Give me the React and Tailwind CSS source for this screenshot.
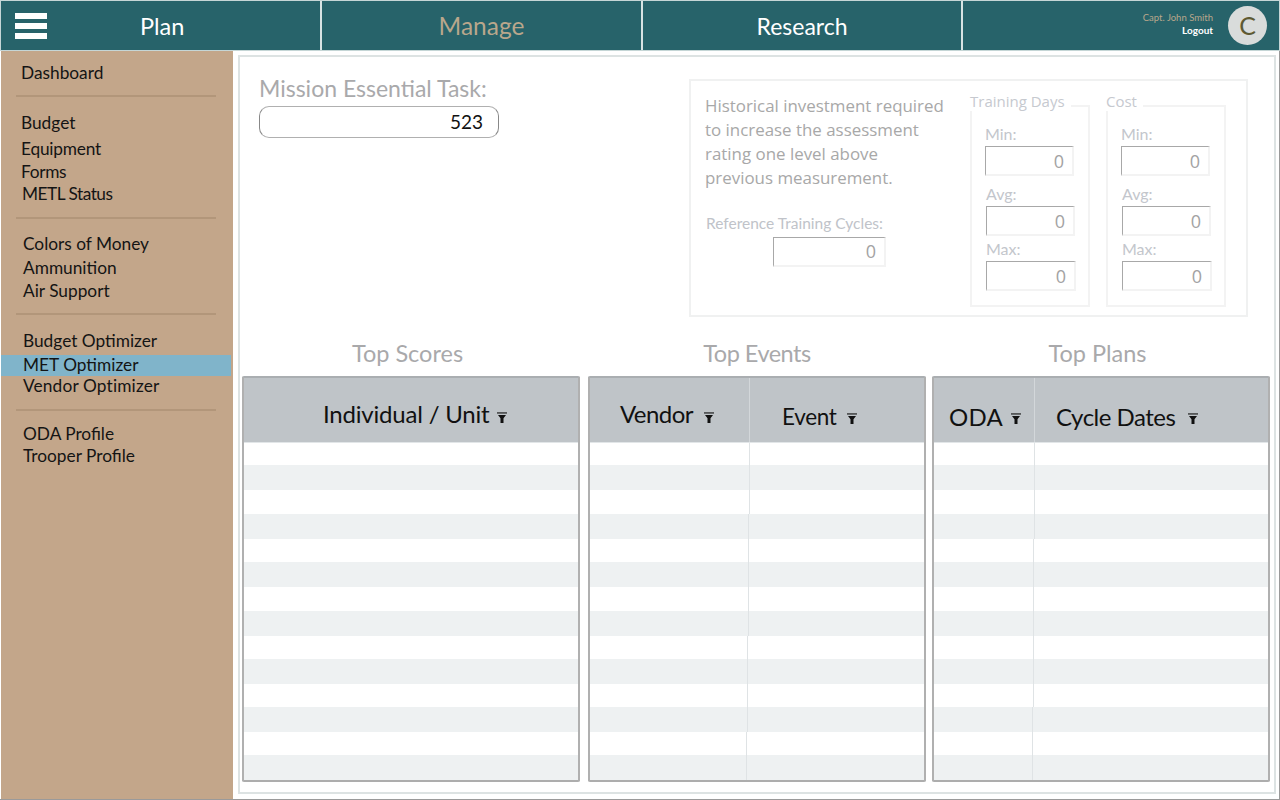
const sideGroups = [
  {
    cls: "pt-[11px] pb-[11px]",
    items: [{ label: "Dashboard", cls: "h-[22px] pl-[20px]" }],
  },
  {
    cls: "pt-[14px] pb-[11px]",
    items: [
      { label: "Budget", cls: "h-[24px] pl-[20px] mb-[2px]" },
      { label: "Equipment", cls: "h-[24px] pl-[20px] tracking-[-0.2px]" },
      { label: "Forms", cls: "h-[21px] pl-[20px] tracking-[-0.3px]" },
      { label: "METL Status", cls: "h-[24px] pl-[21px] tracking-[-0.5px]" },
    ],
  },
  {
    cls: "pt-[13px] pb-[11px]",
    items: [
      { label: "Colors of Money", cls: "h-[24px] pl-[22px]" },
      { label: "Ammunition", cls: "h-[24px] pl-[22px]" },
      { label: "Air Support", cls: "h-[22px] pl-[22px]" },
    ],
  },
  {
    cls: "pt-[13px] pb-[12px]",
    items: [
      { label: "Budget Optimizer", cls: "h-[27px] pb-[2px] pl-[22px]" },
      { label: "MET Optimizer", cls: "h-[21px] pb-[2px] pl-[22px] w-[230px] bg-[#80b4ca]" },
      { label: "Vendor Optimizer", cls: "h-[21px] pb-[2px] pl-[22px] tracking-[0.15px]" },
    ],
  },
  {
    cls: "pt-[12px]",
    items: [
      { label: "ODA Profile", cls: "h-[22px] pl-[22px]" },
      { label: "Trooper Profile", cls: "h-[22px] pl-[22px]" },
    ],
  },
];

const rowHeights = [
  "h-[22px]", "h-[25px]", "h-[24px]", "h-[25px]", "h-[23px]", "h-[25px]", "h-[24px]",
  "h-[25px]", "h-[23px]", "h-[25px]", "h-[23px]", "h-[25px]", "h-[23px]", "h-[26px]",
];
const rowTotal = 338;

function FilterIcon({ className }) {
  return (
    <svg width="10" height="11" viewBox="0 0 10 11" className={`shrink-0 ${className}`}>
      <rect x="0" y="0.4" width="10" height="1.1" fill="#111" />
      <path d="M1 3 H9 L6.5 6.2 V11 H3.5 V6.2 Z" fill="#111" />
    </svg>
  );
}

function Head({ label, cls, iconCls }) {
  return (
    <div className={`flex items-center whitespace-nowrap leading-none text-[#111] ${cls}`}>
      {label}
      <FilterIcon className={iconCls} />
    </div>
  );
}

function DataTable({ title, titleCls, split, splitEnd, children }) {
  return (
    <div className="flex w-[338px] flex-col">
      <div className={`h-[36px] text-center text-[23.5px] leading-[26px] text-[#a9a9ab] ${titleCls}`}>{title}</div>
      <div className="flex h-[406px] flex-col overflow-hidden rounded-[2px] border-x-2 border-t-2 border-b-2 border-x-[#b0b0b0] border-t-[#aaaeb1] border-b-[#adadad]">
        <div className="flex h-[65px] shrink-0 border-b border-[#e2e6e8] bg-[#bfc4c8]">{children}</div>
        {rowHeights.map((h, i) => {
          // the column rule leans a little from top to bottom in the picture
          const sum = rowHeights.slice(0, i).reduce((a, c) => a + Number(c.match(/\d+/)[0]), 0);
          const w = split ? Math.round(split + ((splitEnd - split) * sum) / rowTotal) : null;
          return (
            <div key={i} className={`flex shrink-0 ${h} ${i % 2 ? "bg-[#eef1f2]" : "bg-white"}`}>
              {split && <div className="h-full border-r border-[#dfe3e5]" style={{ width: w }} />}
            </div>
          );
        })}
      </div>
    </div>
  );
}

function ZeroBox({ cls }) {
  return (
    <div className={`flex h-[30px] items-center justify-end border-t border-l border-t-[#a8a8a8] border-l-[#a8a8a8] border-r-2 border-b-2 border-r-[#f3f3f3] border-b-[#f3f3f3] pr-[8px] font-['Open_Sans',sans-serif] text-[18px] text-[#a3a3a3] ${cls}`}>
      0
    </div>
  );
}

function RangeBox({ legend, legendCls, cls }) {
  return (
    <div className={`relative h-[202px] w-[120px] border-2 border-[#f3f3f3] ${cls}`}>
      <div className={`absolute -top-[16px] -left-[2px] bg-white pr-[6px] font-['Open_Sans',sans-serif] text-[15px] leading-[20px] text-[#c6c9cf] ${legendCls}`}>
        {legend}
      </div>
      <div className="pt-[17px] pl-[13px] text-[16px] leading-[20px] text-[#c3c6cc]">
        <div className="h-[22px]">Min:</div>
        <ZeroBox cls="w-[89px]" />
        <div className="mt-[8px] ml-[1px] h-[22px]">Avg:</div>
        <ZeroBox cls="ml-[1px] w-[89px]" />
        <div className="mt-[3px] ml-[1px] h-[22px]">Max:</div>
        <ZeroBox cls="ml-[1px] w-[90px]" />
      </div>
    </div>
  );
}

export default function App() {
  return (
    <div className="flex h-[800px] w-[1280px] flex-col overflow-hidden bg-white font-['Lato',sans-serif]">
      {/* top nav */}
      <header className="flex h-[51px] shrink-0 border border-[#c5d6d6] bg-[#27636a]">
        <div className="relative flex w-[321px] items-center border-r-2 border-[#d7e3e3]">
          <div className="ml-[14px] flex w-[32px] flex-col gap-[4px]">
            <div className="h-[6px] bg-white" />
            <div className="h-[6px] bg-white" />
            <div className="h-[6px] bg-white" />
          </div>
          <div className="ml-[93px] pt-[2px] text-[23.5px] text-white">Plan</div>
        </div>
        <div className="flex w-[321px] items-center justify-center border-r-2 border-[#d7e3e3] pt-[2px] text-[24.5px] text-[#b9a78c]">Manage</div>
        <div className="flex w-[320px] items-center justify-center border-r-2 border-[#d7e3e3] pt-[2px] text-[23px] text-white">Research</div>
        <div className="flex flex-1 items-center justify-end pr-[12px]">
          <div className="mr-[15px] flex flex-col items-end pb-[4px] leading-none">
            <div className="text-[9.5px] leading-[13px] text-[#b9a78c]">Capt. John Smith</div>
            <div className="text-[10px] leading-[13px] font-bold text-white">Logout</div>
          </div>
          <div className="flex h-[39px] w-[39px] items-center justify-center rounded-full bg-[#d9dcdb] text-[25px] text-[#5e5a33]">C</div>
        </div>
      </header>

      <div className="flex min-h-0 flex-1 border-r border-b border-r-[#9a9a9a] border-b-[#9a9a9a]">
        {/* sidebar */}
        <aside className="w-[233px] shrink-0 border-l border-white bg-[#c3a68a] text-[17.3px] leading-none text-[#141414]">
          {sideGroups.map((g, i) => (
            <div key={i}>
              <div className={g.cls}>
                {g.items.map((it) => (
                  <div key={it.label} className={`flex items-center ${it.cls}`}>
                    {it.label}
                  </div>
                ))}
              </div>
              {i < sideGroups.length - 1 && <div className="ml-[15px] h-[2px] w-[200px] bg-[#b2967a]" />}
            </div>
          ))}
        </aside>

        {/* main */}
        <main className="min-w-0 flex-1 pt-[4px] pr-[3px] pb-[5px] pl-[5px]">
          <div className="h-full border-2 border-[#dde3e3] bg-white pl-[2px]">
            <div className="flex h-[283px]">
              <div className="ml-[17px] w-[240px] pt-[16px]">
                <div className="h-[33px] whitespace-nowrap text-[23px] leading-[30px] text-[#a9a9ab]">Mission Essential Task:</div>
                <div className="flex h-[32px] items-center justify-end rounded-[10px] border border-x-[#888] border-t-[#b0b0b0] border-b-[#b0b0b0] pr-[15px] text-[19px] text-[#111]">523</div>
              </div>

              <div className="mt-[22px] ml-[190px] flex h-[238px] w-[559px] border-2 border-[#f0f1f1]">
                <div className="w-[279px] pt-[13px] pl-[14px]">
                  <div className="font-['Open_Sans',sans-serif] text-[16.9px] leading-[24px] text-[#a8a8a8]">
                    Historical investment required
                    <br />
                    to increase the assessment
                    <br />
                    rating one level above
                    <br />
                    previous measurement.
                  </div>
                  <div className="mt-[22px] ml-[1px] text-[15.5px] leading-[22px] whitespace-nowrap text-[#c0c3c9]">Reference Training Cycles:</div>
                  <ZeroBox cls="mt-[3px] ml-[68px] w-[113px]" />
                </div>
                <div className="flex gap-[16px] pt-[24px]">
                  <RangeBox legend="Training Days" />
                  <RangeBox legend="Cost" />
                </div>
              </div>
            </div>

            <div className="flex">
              <DataTable title="Top Scores" titleCls="pr-[7px]">
                <Head label="Individual / Unit" cls="pl-[79px] pt-[8px] text-[24px] tracking-[-0.2px]" iconCls="mt-[6px] ml-[8px]" />
              </DataTable>
              <div className="w-[8px]" />
              <DataTable title="Top Events" titleCls="tracking-[-0.5px]" split={160} splitEnd={157}>
                <div className="w-[160px] shrink-0 border-r border-[#d3d7da]">
                  <Head label="Vendor" cls="h-full pl-[30px] pt-[8px] text-[24px] tracking-[-0.58px]" iconCls="mt-[6px] ml-[11px]" />
                </div>
                <Head label="Event" cls="pl-[32px] pt-[14px] text-[22.5px] tracking-[-0.3px]" iconCls="mt-[3px] ml-[10px]" />
              </DataTable>
              <div className="w-[6px]" />
              <DataTable title="Top Plans" titleCls="pr-[7px]" split={101} splitEnd={99}>
                <div className="w-[101px] shrink-0 border-r border-[#d3d7da]">
                  <Head label="ODA" cls="h-full pl-[15px] pt-[14px] text-[24px] tracking-[0.3px]" iconCls="mt-[3px] ml-[8px]" />
                </div>
                <Head label="Cycle Dates" cls="pl-[21px] pt-[14px] text-[24px] tracking-[-0.5px]" iconCls="mt-[3px] ml-[13px]" />
              </DataTable>
            </div>
          </div>
        </main>
      </div>
    </div>
  );
}
